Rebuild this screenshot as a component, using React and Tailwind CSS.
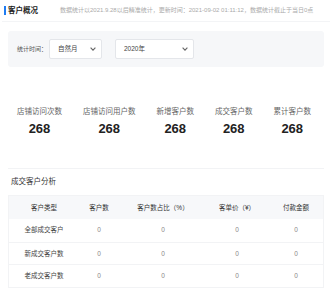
import React from 'react'

const STATS = [
  { label: '店铺访问次数', value: 268 },
  { label: '店铺访问用户数', value: 268 },
  { label: '新增客户数', value: 268 },
  { label: '成交客户数', value: 268 },
  { label: '累计客户数', value: 268 },
]

const COLS = ['客户类型', '客户数', '客户数占比（%）', '客单价（¥）', '付款金额']
const ROWS = ['全部成交客户', '新成交客户数', '老成交客户数']

const GRID = 'grid grid-cols-[70px_40px_88px_60px_58px]'

function Caret() {
  return (
    <svg width="6" height="4" viewBox="0 0 6 4" className="text-[#666]">
      <path d="M0.6 0.6 L3 3.2 L5.4 0.6" fill="none" stroke="currentColor" strokeWidth="1.1" />
    </svg>
  )
}

function Select({ value, className }) {
  return (
    <div className={`flex h-[20px] items-center justify-between rounded-[2px] border border-[#e4e6ea] bg-white pl-[8px] pr-[5px] ${className}`}>
      <span className="text-[6.5px] text-[#444]">{value}</span>
      <Caret />
    </div>
  )
}

export default function App() {
  return (
    <div
      className="h-[298px] w-[332px] overflow-hidden bg-white"
      style={{ fontFamily: '"Liberation Sans", "Noto Sans CJK SC", sans-serif' }}>
      {/* header */}
      <div className="mx-[2px] flex h-[22px] items-center border-b border-[#f3f4f6] pl-[2px]">
        <div className="h-[9px] w-[2px] bg-[#1f7cf2]" />
        <span className="ml-[2px] text-[7.5px] font-bold text-[#222]">客户概况</span>
        <span className="ml-[22px] whitespace-nowrap text-[6px] text-[#aaa]">
          数据统计以2021.9.28以后精准统计，更新时间：2021-09-02 01:11:12，数据统计截止于当日0点
        </span>
      </div>

      {/* filter */}
      <div className="mx-[8px] mt-[9px] flex h-[36px] items-center rounded-[3px] bg-[#f6f7f9] pl-[9px]">
        <span className="w-[32px] text-[6px] text-[#555]">统计时间：</span>
        <Select value="自然月" className="w-[53px]" />
        <Select value="2020年" className="ml-[13px] w-[79px]" />
      </div>

      {/* stats */}
      <div className="flex h-[101px] items-start gap-[21px] pl-[17px] pt-[40px]">
        {STATS.map(s => (
          <div key={s.label} className="flex flex-col items-center">
            <span className="whitespace-nowrap text-[7.5px] leading-[10px] text-[#666]">{s.label}</span>
            <span className="mt-[4px] text-[13px] font-bold leading-[16px] text-[#222]">{s.value}</span>
          </div>
        ))}
      </div>

      <div className="mx-[8px] border-t border-[#f2f3f5]" />

      {/* analysis */}
      <div className="px-[8px]">
        <div className="flex h-[26px] items-center pl-[3px] text-[7.5px] text-[#333]">成交客户分析</div>
        <div className="border border-[#f2f3f5]">
          <div className={`${GRID} h-[23px] items-center bg-[#f7f8fa] text-center text-[6.5px] text-[#333]`}>
            {COLS.map(c => <span key={c} className="whitespace-nowrap">{c}</span>)}
          </div>
          {ROWS.map((r, i) => (
            <div
              key={r}
              className={`${GRID} h-[22.7px] items-center text-center text-[6.5px] ${i > 0 ? 'border-t border-[#f2f3f5]' : ''}`}>
              <span className="whitespace-nowrap text-[#444]">{r}</span>
              <span className="text-[#888]">0</span>
              <span className="text-[#888]">0</span>
              <span className="text-[#888]">0</span>
              <span className="text-[#888]">0</span>
            </div>
          ))}
        </div>
      </div>
    </div>
  )
}
